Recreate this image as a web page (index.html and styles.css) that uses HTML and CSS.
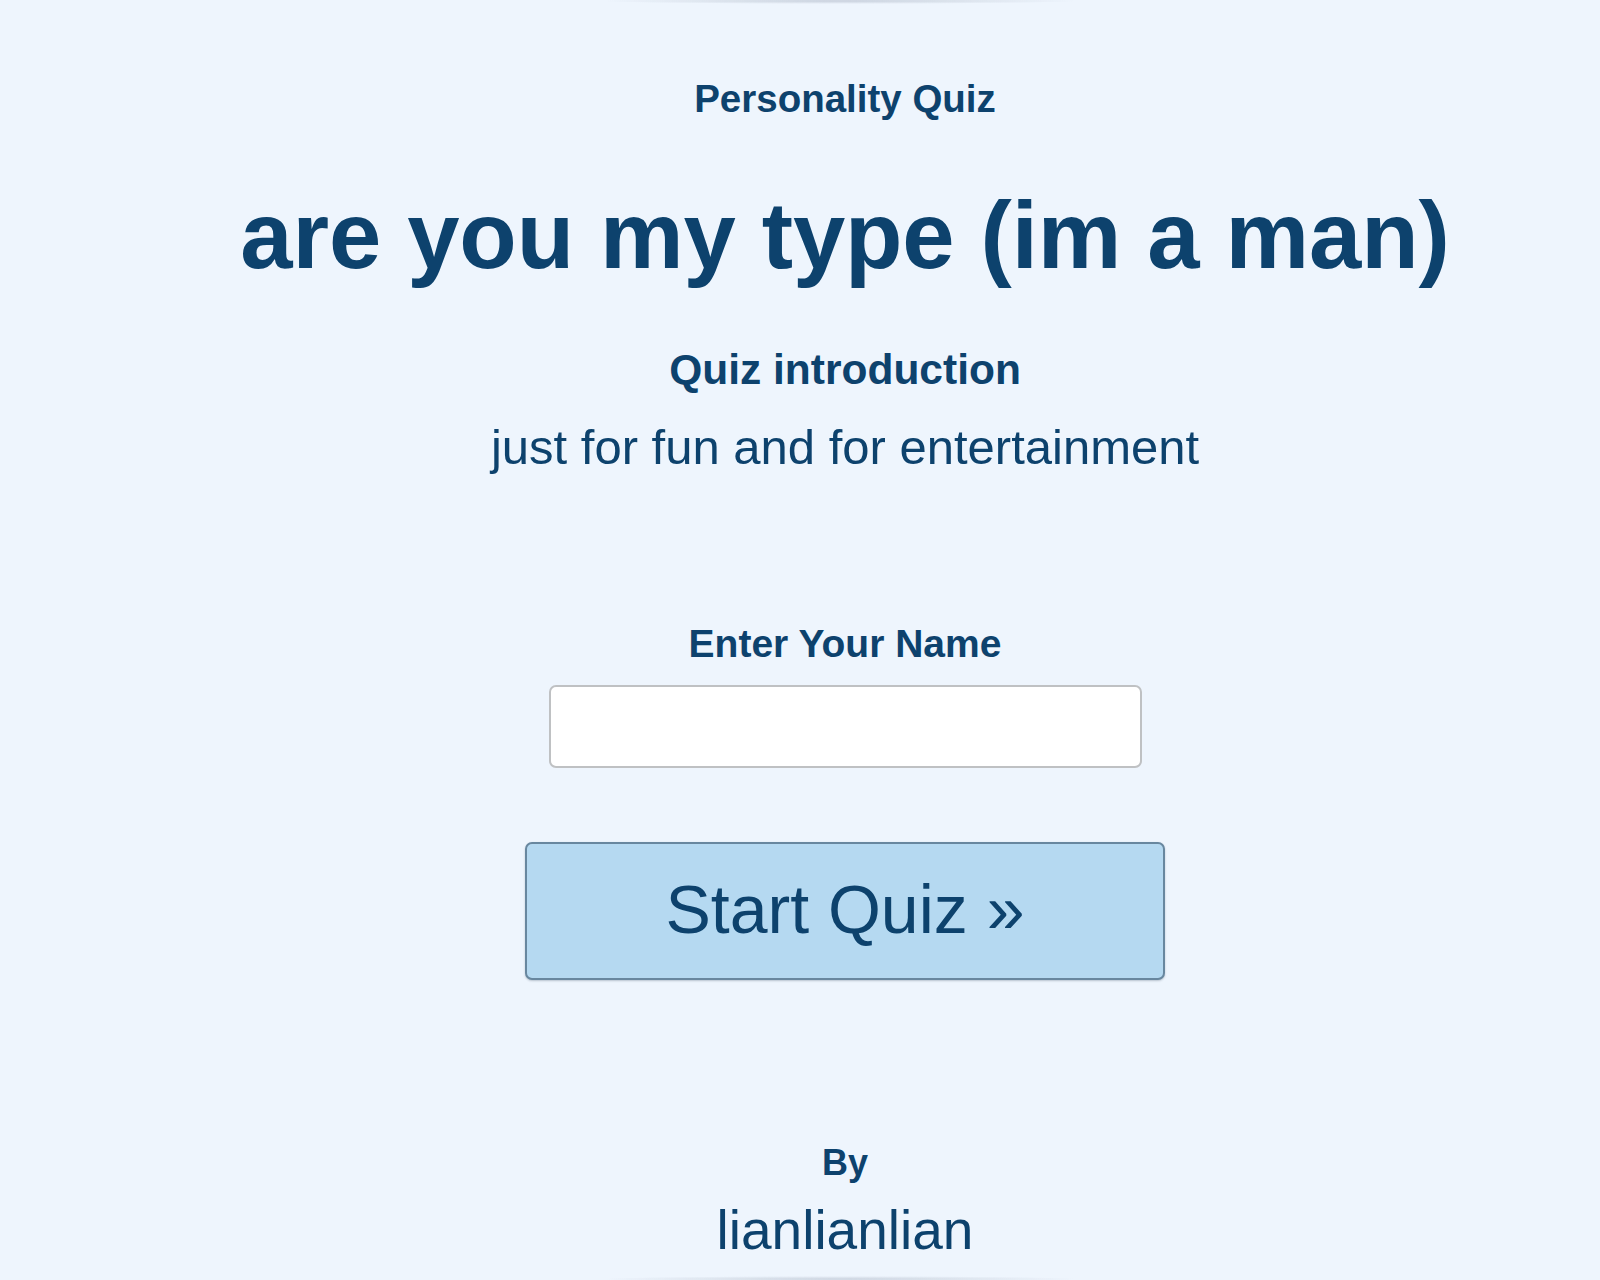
FILE: index.html
```html
<!DOCTYPE html>
<html lang="en">
<head>
<meta charset="utf-8">
<title>are you my type (im a man)</title>
<link rel="stylesheet" href="styles.css">
</head>
<body>
<div class="shade shade-top"></div>
<div class="shade shade-bottom"></div>
<main class="quiz">
  <h4 class="kicker">Personality Quiz</h4>
  <h1 class="title">are you my type (im a man)</h1>
  <h3 class="intro-head">Quiz introduction</h3>
  <p class="intro">just for fun and for entertainment</p>
  <label class="name-label" for="name">Enter Your Name</label>
  <input class="name-input" id="name" type="text">
  <button class="start" type="button">Start Quiz &raquo;</button>
  <h4 class="by">By</h4>
  <p class="author">lianlianlian</p>
</main>
</body>
</html>
```

FILE: styles.css
```css
html, body {
  margin: 0;
  padding: 0;
  height: 100%;
  overflow: hidden;
}
body {
  background: #eef5fd;
  font-family: "Liberation Sans", Arial, sans-serif;
  color: #0d426d;
}
.shade {
  position: fixed;
  left: 600px;
  width: 480px;
  height: 6px;
  pointer-events: none;
}
.shade-top {
  top: -2px;
  background: radial-gradient(ellipse at center, rgba(170, 180, 195, 0.55), rgba(170, 180, 195, 0) 70%);
}
.shade-bottom {
  bottom: -2px;
  background: radial-gradient(ellipse at center, rgba(170, 180, 195, 0.5), rgba(170, 180, 195, 0) 70%);
}
.quiz {
  display: flex;
  flex-direction: column;
  align-items: center;
  padding: 76px 0 0 90px;
  text-align: center;
}
.quiz > * {
  margin: 0;
}
.kicker {
  font-size: 38.5px;
  line-height: 46px;
  font-weight: 700;
}
.title {
  margin-top: 58px;
  font-size: 94px;
  line-height: 112px;
  font-weight: 700;
  letter-spacing: -0.1px;
  white-space: nowrap;
}
.intro-head {
  margin-top: 53px;
  font-size: 42.5px;
  line-height: 50px;
  font-weight: 700;
}
.intro {
  margin-top: 23px;
  font-size: 49px;
  line-height: 58px;
  font-weight: 400;
}
.name-label {
  margin-top: 145px;
  font-size: 39px;
  line-height: 46px;
  font-weight: 700;
}
.name-input {
  margin-top: 18px;
  width: 593px;
  height: 83px;
  box-sizing: border-box;
  border: 2px solid #bfc1c3;
  border-radius: 7px;
  background: #ffffff;
  font: inherit;
  font-size: 40px;
  padding: 0 14px;
  outline: none;
}
.start {
  margin-top: 74px;
  width: 640px;
  height: 138px;
  box-sizing: border-box;
  padding: 26px 0 30px;
  border: 2px solid #68879f;
  border-radius: 7px;
  background: #b5d9f1;
  box-shadow: 0 1px 2px rgba(60, 80, 100, 0.3);
  font-family: "Liberation Sans", Arial, sans-serif;
  font-size: 68px;
  line-height: 78px;
  font-weight: 400;
  color: #0d426d;
  cursor: pointer;
}
.by {
  margin-top: 162px;
  font-size: 36px;
  line-height: 42px;
  font-weight: 700;
}
.author {
  margin-top: 15px;
  font-size: 55px;
  line-height: 62px;
  font-weight: 400;
}
```
